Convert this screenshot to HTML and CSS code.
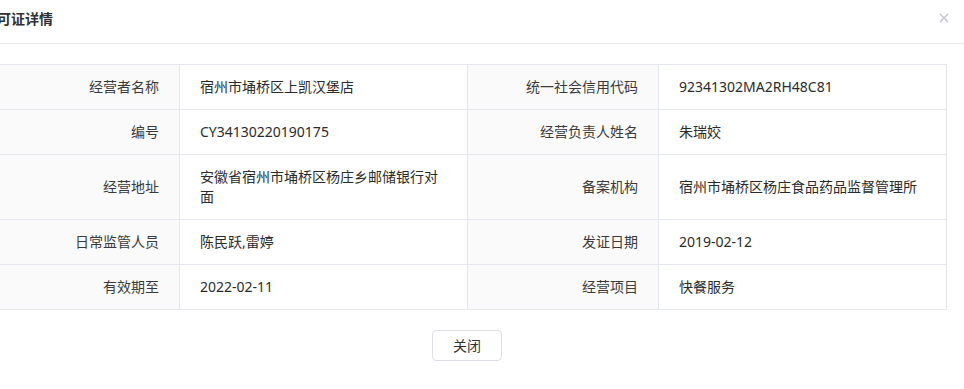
FILE: index.html
```html
<!DOCTYPE html>
<html lang="zh-CN">
<head>
    <meta charset="UTF-8">
    <title>许可证详情</title>
    <link rel="stylesheet" href="styles.css">
</head>
<body>
<div class="dialog">
    <div class="dialog-header">
        <span class="dialog-title">许可证详情</span>
        <span class="dialog-close">
            <svg width="10" height="10" viewBox="0 0 10 10"><path d="M1 1L9 9M9 1L1 9" stroke="#c0c4cc" stroke-width="1.4" fill="none"/></svg>
        </span>
    </div>
    <div class="dialog-body">
        <table class="detail-table">
            <colgroup>
                <col class="col-label">
                <col class="col-value">
                <col class="col-label">
                <col class="col-value">
            </colgroup>
            <tbody>
            <tr>
                <td class="label">经营者名称</td>
                <td class="value">宿州市埇桥区上凯汉堡店</td>
                <td class="label">统一社会信用代码</td>
                <td class="value">92341302MA2RH48C81</td>
            </tr>
            <tr>
                <td class="label">编号</td>
                <td class="value">CY34130220190175</td>
                <td class="label">经营负责人姓名</td>
                <td class="value">朱瑞姣</td>
            </tr>
            <tr>
                <td class="label">经营地址</td>
                <td class="value">安徽省宿州市埇桥区杨庄乡邮储银行对面</td>
                <td class="label">备案机构</td>
                <td class="value">宿州市埇桥区杨庄食品药品监督管理所</td>
            </tr>
            <tr>
                <td class="label">日常监管人员</td>
                <td class="value">陈民跃,雷婷</td>
                <td class="label">发证日期</td>
                <td class="value">2019-02-12</td>
            </tr>
            <tr>
                <td class="label">有效期至</td>
                <td class="value">2022-02-11</td>
                <td class="label">经营项目</td>
                <td class="value">快餐服务</td>
            </tr>
            </tbody>
        </table>
    </div>
    <div class="dialog-footer">
        <button class="btn" type="button">关闭</button>
    </div>
</div>
</body>
</html>
```

FILE: styles.css
```css
body {
    margin: 0;
    background: #ffffff;
    font-family: "Noto Sans", "Noto Sans CJK SC", sans-serif;
    font-size: 14px;
    color: #333333;
}
.dialog {
    width: 998px;
    margin-left: -32px;
    background: #ffffff;
}
.dialog-header {
    display: flex;
    justify-content: space-between;
    align-items: center;
    height: 43px;
    padding: 0 15px 0 15px;
    border-bottom: 1px solid #e8e8e8;
    box-sizing: content-box;
}
.dialog-title {
    font-size: 14px;
    font-weight: bold;
    line-height: 20px;
    color: #303133;
    margin-top: -5px;
}
.dialog-close {
    display: flex;
    margin-right: 2px;
    margin-top: -7px;
    cursor: pointer;
}
.dialog-body {
    padding: 20px 20px 0;
}
.detail-table {
    width: 958px;
    table-layout: fixed;
    border-collapse: collapse;
}
.col-label {
    width: 191px;
}
.col-value {
    width: 288px;
}
.detail-table td {
    padding: 12px 20px;
    line-height: 20px;
    border: 1px solid #e4e7ed;
    vertical-align: middle;
}
.label {
    text-align: right;
    background-color: #fafafa;
    color: #3a3a3a;
}
.value {
    text-align: left;
    background-color: #ffffff;
    color: #2b2b2b;
}
.dialog-footer {
    display: flex;
    justify-content: center;
    padding-top: 20px;
}
.btn {
    height: 31px;
    padding: 0 20px;
    font-family: inherit;
    font-size: 14px;
    line-height: 29px;
    color: #333333;
    background: #ffffff;
    border: 1px solid #dcdfe6;
    border-radius: 4px;
    cursor: pointer;
}
```
